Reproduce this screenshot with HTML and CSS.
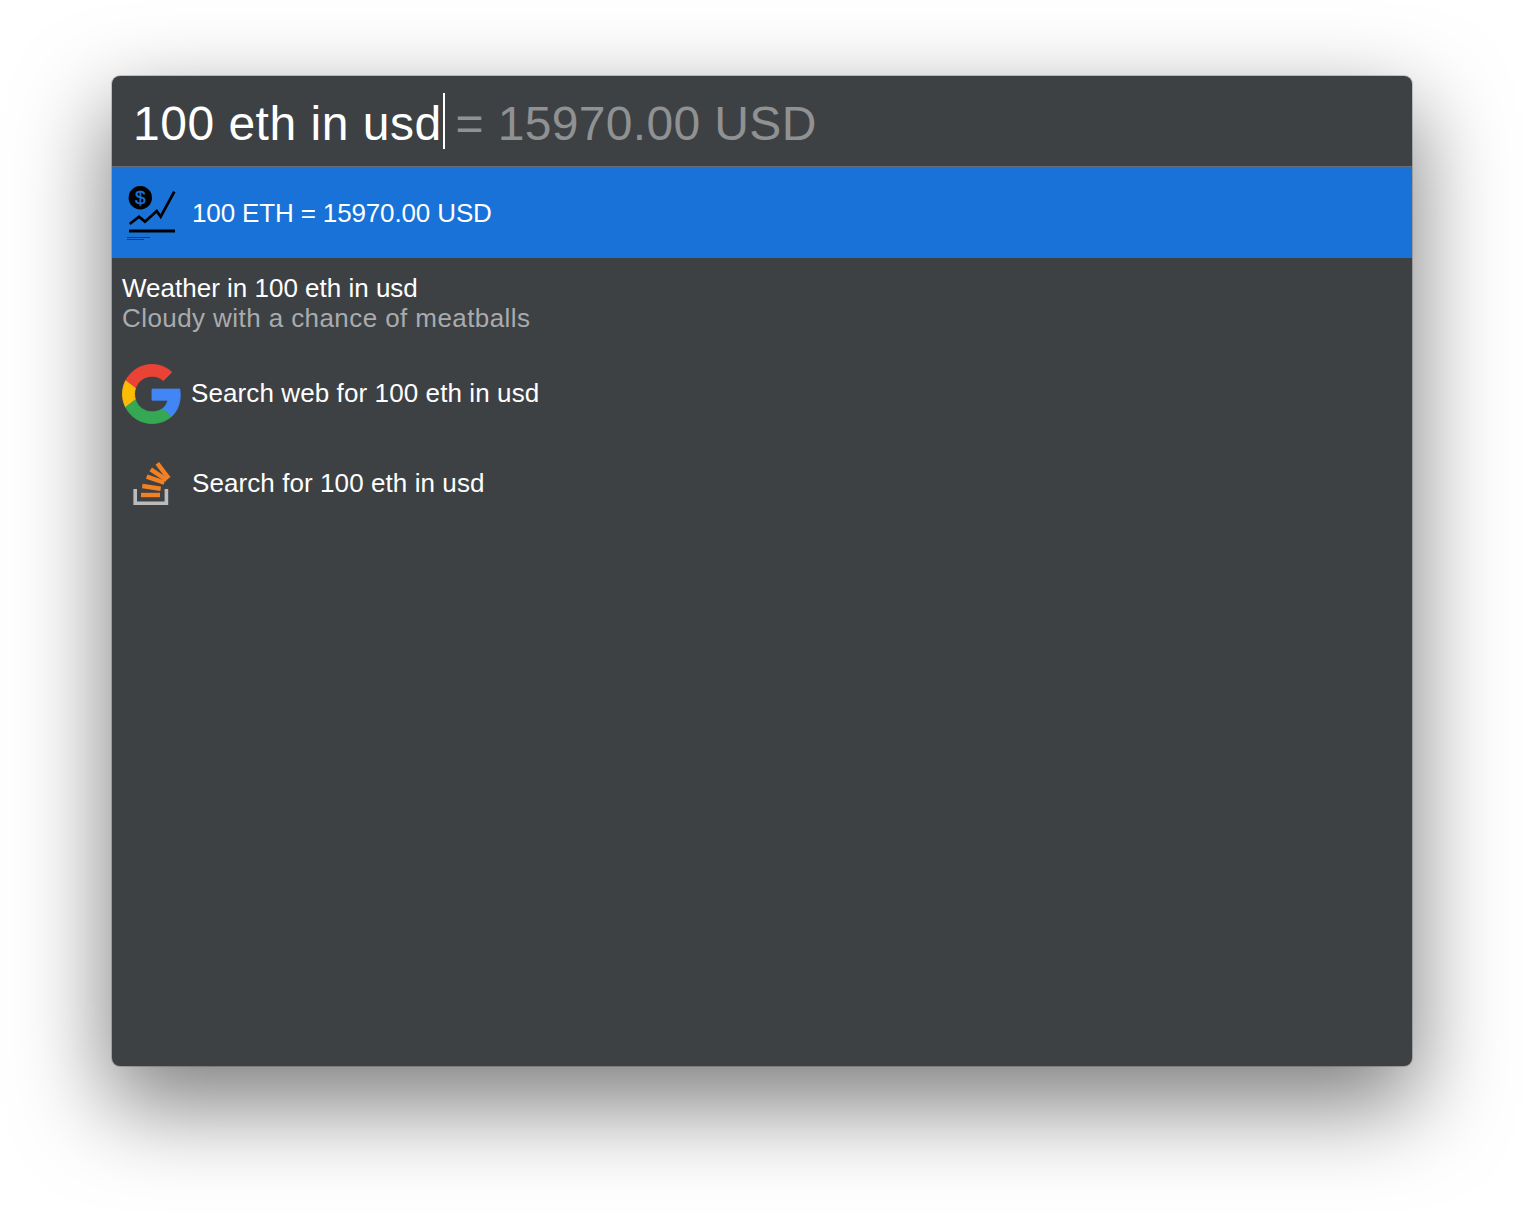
FILE: index.html
```html
<!DOCTYPE html>
<html lang="en">
<head>
<meta charset="utf-8">
<title>Launcher</title>
<link rel="stylesheet" href="styles.css">
</head>
<body>
<main class="window">
  <header class="search">
    <span class="query">100 eth in usd</span><span class="caret"></span><span class="answer">= 15970.00 USD</span>
  </header>
  <ul class="results">
    <li class="row row-selected">
      <svg class="icon" viewBox="0 0 60 60" aria-hidden="true">
        <circle cx="18.3" cy="14.7" r="11.7" fill="#000"/>
        <text x="18.3" y="21" class="dollar">$</text>
        <path d="M7.7 41 L17 33.7 L23 38.7 L34.7 28 L38.7 33.7 L52.3 8.7" fill="none" stroke="#000" stroke-width="2.8"/>
        <rect x="7" y="46.5" width="46" height="3" fill="#000"/>
        <rect x="5" y="54" width="23" height="1" fill="#0f3d78"/>
        <rect x="5" y="56" width="17" height="1" fill="#0f3d78"/>
      </svg>
      <span class="title">100 ETH = 15970.00 USD</span>
    </li>
    <li class="row row-text">
      <span class="title">Weather in 100 eth in usd</span>
      <span class="subtitle">Cloudy with a chance of meatballs</span>
    </li>
    <li class="row row-google">
      <svg class="icon-google" viewBox="-0.4 -0.4 48.8 48.8" aria-hidden="true">
        <path class="g-red" d="M24 9.5c3.54 0 6.71 1.22 9.21 3.6l6.85-6.85C35.9 2.38 30.47 0 24 0 14.62 0 6.51 5.38 2.56 13.22l7.98 6.19C12.43 13.72 17.74 9.5 24 9.5z"/>
        <path class="g-blue" d="M46.98 24.55c0-1.57-.15-3.09-.38-4.55H24v9.02h12.94c-.58 2.96-2.26 5.48-4.78 7.18l7.73 6c4.51-4.18 7.09-10.36 7.09-17.65z"/>
        <path class="g-yellow" d="M10.53 28.59c-.48-1.45-.76-2.99-.76-4.59s.27-3.14.76-4.59l-7.98-6.19C.92 16.46 0 20.12 0 24c0 3.88.92 7.54 2.56 10.78l7.97-6.19z"/>
        <path class="g-green" d="M24 48c6.48 0 11.93-2.13 15.89-5.81l-7.73-6c-2.15 1.45-4.92 2.3-8.16 2.3-6.26 0-11.57-4.22-13.47-9.91l-7.98 6.19C6.51 42.62 14.62 48 24 48z"/>
      </svg>
      <span class="title">Search web for 100 eth in usd</span>
    </li>
    <li class="row row-stack">
      <svg class="icon" viewBox="0 0 60 60" aria-hidden="true">
        <path class="so-tray" d="M13.2 36 V50.2 H44.4 V36"/>
        <g class="so-bars">
          <line x1="19" y1="42" x2="38" y2="42"/>
          <line x1="20.3" y1="33" x2="38.7" y2="35.7"/>
          <line x1="24.7" y1="23.7" x2="42.3" y2="29.7"/>
          <line x1="28.7" y1="16.3" x2="44.7" y2="27"/>
          <line x1="35.3" y1="10.3" x2="46.7" y2="25.3"/>
        </g>
      </svg>
      <span class="title">Search for 100 eth in usd</span>
    </li>
  </ul>
</main>
</body>
</html>
```
FILE: styles.css
```css
* { box-sizing: border-box; }
html, body { margin: 0; padding: 0; background: #fff; }
body {
  width: 1524px;
  height: 1214px;
  padding: 76px 112px 148px;
  overflow: hidden;
  font-family: "Liberation Sans", Arial, sans-serif;
  color: #fff;
}
.window {
  display: flex;
  flex-direction: column;
  height: 990px;
  background: #3e4144;
  border-radius: 8px;
  overflow: hidden;
  box-shadow: 0 0 0 1px rgba(0, 0, 0, .18), 0 36px 90px 4px rgba(0, 0, 0, .5);
}
.search {
  height: 91px;
  flex: none;
  display: flex;
  align-items: center;
  padding-left: 21px;
  border-bottom: 1px solid #6a6c6e;
  font-size: 48px;
  white-space: nowrap;
}
.query { letter-spacing: .5px; padding-top: 4px; }
.answer { color: #8f9193; letter-spacing: .35px; padding-top: 4px; }
.caret {
  width: 2px;
  height: 56px;
  margin: 0 11px 0 1px;
  background: #fff;
}
.results { list-style: none; margin: 0; padding: 0; font-size: 26px; }
.row { display: flex; align-items: center; height: 90px; padding-left: 10px; white-space: nowrap; }
.row-selected { height: 91px; padding-top: 1px; background: #1972d8; }
.row-selected .title { letter-spacing: -.14px; }
.row-text {
  flex-direction: column;
  align-items: flex-start;
  justify-content: center;
  line-height: 30px;
}
.row-google .title { letter-spacing: .1px; }
.row-stack .title { letter-spacing: .08px; }
.subtitle { color: #a9abad; letter-spacing: .42px; }
.icon { width: 60px; height: 60px; flex: none; margin-right: 10px; }
.icon-google { width: 60px; height: 60px; flex: none; margin: 2px 9px 0 0; overflow: visible; }
.dollar { font-size: 19px; font-weight: 400; fill: #1972d8; text-anchor: middle; stroke: #1972d8; stroke-width: .4; }
.g-red { fill: #ea4335; stroke: #ea4335; stroke-width: .7; }
.g-blue { fill: #4285f4; stroke: #4285f4; stroke-width: .7; }
.g-yellow { fill: #fbbc05; stroke: #fbbc05; stroke-width: .7; }
.g-green { fill: #34a853; stroke: #34a853; stroke-width: .7; }
.so-tray { fill: none; stroke: #bcbbbb; stroke-width: 3.6; }
.so-bars line { stroke: #f48024; stroke-width: 4.4; }
```
